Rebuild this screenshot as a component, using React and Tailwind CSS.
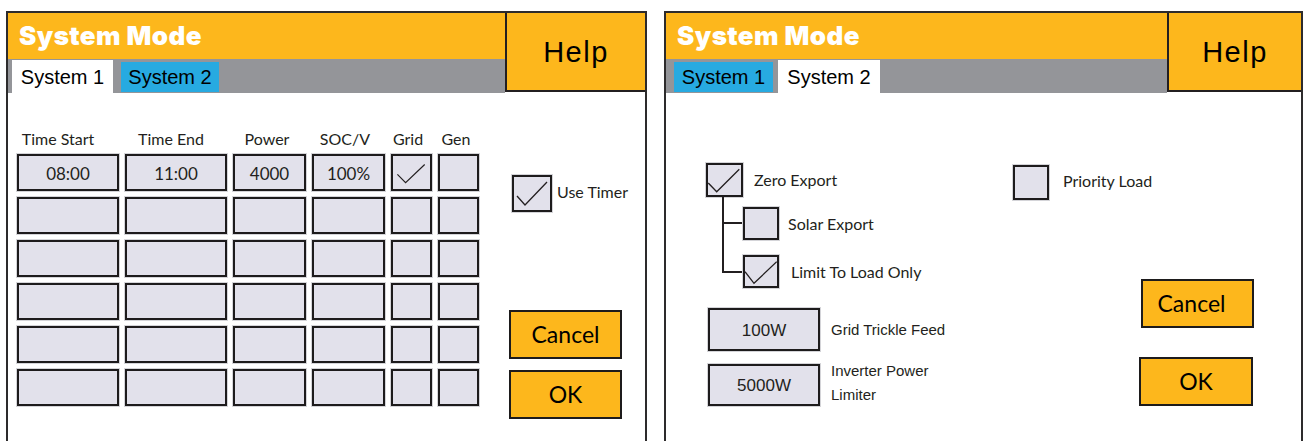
import React from "react";

function Box({ className = "", vb, check, children }) {
  return (
    <div
      className={`flex shrink-0 items-center justify-center border-2 border-[#1d1b1c] bg-[#e2e1eb] shadow-[0_0_0_1px_#d4d4d8] ${className}`}
    >
      {check && (
        <svg viewBox={vb} className="block h-full w-full">
          <polyline points={check} fill="none" stroke="#231f20" strokeWidth="1.3" />
        </svg>
      )}
      {children}
    </div>
  );
}

function Header({ active, right }) {
  const on = "flex h-[33px] items-center justify-center bg-white";
  const off = "mb-[1px] flex h-[30px] items-center justify-center bg-[#27aae1]";
  return (
    <div className="flex items-start">
      <div className="flex flex-1 flex-col">
        <div className="flex h-[46px] items-center bg-[#fdb71c] pl-[11px]">
          <span className="font-['Inter',sans-serif] text-[26px] font-black leading-none tracking-[0.4px] text-white">
            System Mode
          </span>
        </div>
        <div
          className={`flex h-[34px] items-end bg-[#949599] font-['Liberation_Sans',Arial,sans-serif] text-[20px] leading-none text-black ${
            right ? "gap-[5px] pl-[8px]" : "gap-[8px] pl-[4px]"
          }`}
        >
          <div className={active === 1 ? `${on} w-[101px]` : `${off} w-[99px]`}>System 1</div>
          <div className={active === 2 ? `${on} w-[102px]` : `${off} w-[98px]`}>System 2</div>
        </div>
      </div>
      <div
        className={`flex h-[79px] items-center justify-center border-b-2 border-l-2 border-[#231f20] bg-[#fdb71c] pt-[3px] font-['Liberation_Sans',Arial,sans-serif] text-[29px] tracking-[1.5px] text-black ${
          right ? "w-[134px]" : "w-[140px]"
        }`}
      >
        Help
      </div>
    </div>
  );
}

function Button({ className = "", children }) {
  return (
    <div
      className={`flex h-[49px] items-center justify-center border-2 border-[#1d1b1c] bg-[#fdb71c] text-[23px] text-black ${className}`}
    >
      {children}
    </div>
  );
}

const cols = [
  { label: "Time Start", w: "w-[102px]", pad: "pr-[20px]" },
  { label: "Time End", w: "w-[102px]", pad: "pr-[10px]" },
  { label: "Power", w: "w-[73px]", pad: "pr-[5px]" },
  { label: "SOC/V", w: "w-[73px]", pad: "pr-[7px]" },
  { label: "Grid", w: "w-[41px]", pad: "pr-[7px]" },
  { label: "Gen", w: "w-[41px]", pad: "pr-[5px]" },
];
const first = ["08:00", "11:00", "4000", "100%"];

function SystemOne() {
  return (
    <div className="flex pl-[9px] pt-[37px]">
      <div className="flex flex-col">
        <div className="flex h-[18px] gap-[6px] text-[16px] leading-[18px]">
          {cols.map((c) => (
            <div key={c.label} className={`${c.w} ${c.pad} whitespace-nowrap text-center`}>
              {c.label}
            </div>
          ))}
        </div>
        {[0, 1, 2, 3, 4, 5].map((r) => (
          <div key={r} className="mt-[6px] flex gap-[6px]">
            {cols.map((c, i) => (
              <Box
                key={c.label}
                className={`h-[37px] pt-[3px] text-[17px] ${c.w}`}
                vb={r === 0 && i === 4 ? "0 0 37 33" : undefined}
                check={r === 0 && i === 4 ? "3,17 12,26 33,6" : undefined}
              >
                {r === 0 && first[i]}
              </Box>
            ))}
          </div>
        ))}
      </div>
      <div className="ml-[30px] flex flex-col">
        <div className="mt-[45px] flex items-center gap-[5px] pl-[3px]">
          <Box className="h-[37px] w-[40px]" vb="0 0 36 33" check="3,19 11,28 33,5" />
          <span className="-mt-[3px] text-[16px]">Use Timer</span>
        </div>
        <Button className="mt-[98px] w-[113px]">Cancel</Button>
        <Button className="mt-[11px] w-[113px]">OK</Button>
      </div>
    </div>
  );
}

function SystemTwo() {
  return (
    <div className="flex">
      <div className="flex w-[347px] flex-col pl-[40px] pt-[70px] text-[16px]">
        <div className="flex items-center gap-[11px]">
          <Box className="h-[34px] w-[37px]" vb="0 0 33 30" check="0.3,18 8.7,26.7 31.3,4.3" />
          <span>Zero Export</span>
        </div>
        <div className="ml-[16px] flex">
          <svg width="21" height="91" className="block shrink-0">
            <line x1="1" y1="0" x2="1" y2="76" stroke="#231f20" strokeWidth="2" />
            <line x1="0" y1="26" x2="21" y2="26" stroke="#231f20" strokeWidth="2" />
            <line x1="0" y1="75" x2="21" y2="75" stroke="#231f20" strokeWidth="2" />
          </svg>
          <div className="flex flex-col pt-[10px]">
            <div className="flex items-center gap-[9px]">
              <Box className="h-[33px] w-[36px]" />
              <span>Solar Export</span>
            </div>
            <div className="mt-[15px] flex items-center gap-[12px]">
              <Box className="h-[33px] w-[36px]" vb="0 0 32 29" check="0,14.7 9,26.3 31.7,4.7" />
              <span>Limit To Load Only</span>
            </div>
          </div>
        </div>
        <div className="ml-[2px] mt-[20px] flex items-center gap-[11px] font-['Liberation_Sans',Arial,sans-serif]">
          <Box className="h-[43px] w-[112px] pt-[2px] text-[17px]">100W</Box>
          <span className="mt-[2px] text-[15px]">Grid Trickle Feed</span>
        </div>
        <div className="ml-[2px] mt-[11px] flex items-center gap-[11px] font-['Liberation_Sans',Arial,sans-serif]">
          <Box className="h-[42px] w-[112px] pt-[2px] text-[17px]">5000W</Box>
          <span className="-mt-[3px] text-[15px] leading-[24px]">
            Inverter Power
            <br />
            Limiter
          </span>
        </div>
      </div>
      <div className="flex flex-col items-start pt-[72px]">
        <div className="flex items-center gap-[14px] text-[16px] leading-[20px]">
          <Box className="h-[35px] w-[36px]" />
          <span className="-mt-[3px]">Priority Load</span>
        </div>
        <Button className="ml-[128px] mt-[79px] w-[113px] pr-[12px]">Cancel</Button>
        <Button className="ml-[126px] mt-[29px] w-[114px]">OK</Button>
      </div>
    </div>
  );
}

export default function App() {
  return (
    <div className="flex h-[441px] gap-[17px] overflow-hidden bg-white pl-[6px] pt-[11px] font-['Lato',sans-serif] text-[#231f20]">
      <div className="flex h-[440px] w-[641px] shrink-0 flex-col border-2 border-[#2d2b2c] bg-white">
        <Header active={1} />
        <SystemOne />
      </div>
      <div className="flex h-[440px] w-[639px] shrink-0 flex-col border-2 border-[#2d2b2c] bg-white">
        <Header active={2} right />
        <SystemTwo />
      </div>
    </div>
  );
}
